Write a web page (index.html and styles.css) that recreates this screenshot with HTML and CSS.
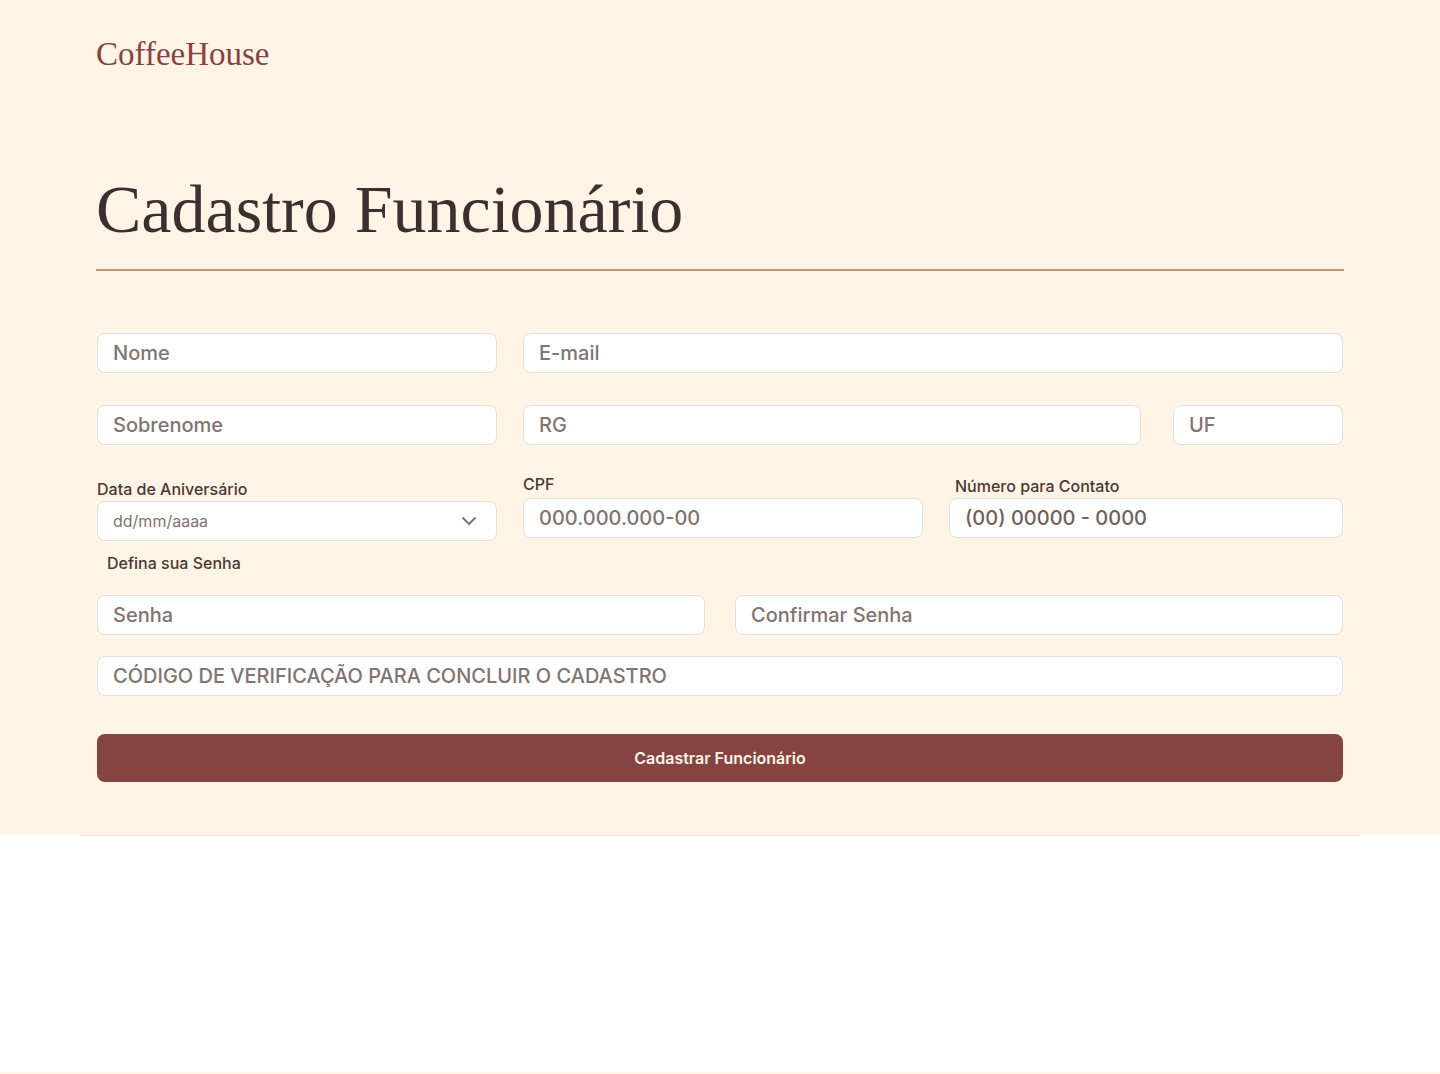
FILE: index.html
```html
<!DOCTYPE html>
<html lang="pt-BR">
<head>
  <meta charset="utf-8">
  <meta name="viewport" content="width=device-width, initial-scale=1">
  <title>Cadastro Funcionário | CoffeeHouse</title>
  <link rel="stylesheet" href="styles.css">
</head>
<body>
  <div class="page">
    <header class="header">
      <a class="logo" href="#">CoffeeHouse</a>
    </header>
    <main class="main">
      <h1 class="title">Cadastro Funcionário</h1>
      <form class="form">
        <div class="row row-name">
          <input class="input" type="text" placeholder="Nome" aria-label="Nome">
          <input class="input" type="email" placeholder="E-mail" aria-label="E-mail">
        </div>
        <div class="row row-document">
          <input class="input" type="text" placeholder="Sobrenome" aria-label="Sobrenome">
          <div class="row row-rg">
            <input class="input" type="text" placeholder="RG" aria-label="RG">
            <input class="input" type="text" placeholder="UF" aria-label="UF">
          </div>
        </div>
        <div class="row row-contact">
          <div class="field">
            <label class="label" for="birthday">Data de Aniversário</label>
            <div class="select-wrap">
              <select class="input select" id="birthday">
                <option>dd/mm/aaaa</option>
              </select>
              <svg class="chevron" viewBox="0 0 16 16" aria-hidden="true"><path d="M1.5 4.5 8 11l6.500-6.500"/></svg>
            </div>
          </div>
          <div class="field field-raised field-spaced">
            <label class="label" for="cpf">CPF</label>
            <input class="input" id="cpf" type="text" placeholder="000.000.000-00">
          </div>
          <div class="field field-raised">
            <label class="label label-indent" for="phone">Número para Contato</label>
            <input class="input input-phone" id="phone" type="tel" placeholder="(00) 00000 - 0000">
          </div>
        </div>
        <fieldset class="passwords">
          <legend class="label legend">Defina sua Senha</legend>
          <div class="row row-password">
            <input class="input" type="password" placeholder="Senha" aria-label="Senha">
            <input class="input" type="password" placeholder="Confirmar Senha" aria-label="Confirmar Senha">
          </div>
        </fieldset>
        <input class="input" type="text" placeholder="CÓDIGO DE VERIFICAÇÃO PARA CONCLUIR O CADASTRO" aria-label="Código de verificação">
        <button class="submit" type="submit">Cadastrar Funcionário</button>
      </form>
    </main>
  </div>
  <footer class="footer"></footer>
</body>
</html>
```
FILE: styles.css
```css
*,
*::before,
*::after {
  box-sizing: border-box;
}

body {
  display: flex;
  flex-direction: column;
  min-height: 100vh;
  margin: 0;
  background: #fff4e6;
  color: #4b3832;
  font-family: Inter, sans-serif;
}

.header {
  padding: 32px 96px;
}

.logo {
  display: block;
  color: #854442;
  font: 500 33px/44px "Liberation Serif", serif;
  text-decoration: none;
}

.main {
  padding: 60px 96px 53px;
}

.title {
  margin: 0;
  padding-bottom: 19px;
  border-bottom: 2px solid #be9b7b;
  color: #3c2f2f;
  font: 400 68px/82px "Liberation Serif", serif;
}

.form {
  padding: 62px 1px 0;
}

.row {
  display: grid;
}

.row-name {
  grid-template-columns: 400fr 820fr;
  gap: 26px;
  margin-bottom: 32px;
}

.row-document {
  grid-template-columns: 400fr 820fr;
  gap: 26px;
  margin-bottom: 27px;
}

.row-rg {
  grid-template-columns: 618fr 170fr;
  gap: 32px;
}

.row-contact {
  grid-template-columns: 400fr 400fr 394fr;
  align-items: end;
  gap: 26px;
}

.row-password {
  grid-template-columns: 1fr 1fr;
  gap: 30px;
}

.input {
  width: 100%;
  min-width: 0;
  height: 40px;
  padding: 0 15px;
  border: 1px solid #e0e0e0;
  border-radius: 8px;
  background: #fff;
  color: #4b3832;
  font: 500 20px/24px Inter, sans-serif;
}

.input::placeholder {
  color: #817471;
  opacity: 1;
}

.input-phone::placeholder {
  color: #6f605b;
}

.field {
  display: flex;
  flex-direction: column;
}

.field-raised {
  padding-bottom: 3px;
}

.field-spaced {
  gap: 2px;
}

.label {
  color: #4b3832;
  font-size: 16px;
  font-weight: 500;
  line-height: 24px;
}

.label-indent {
  padding-left: 6px;
}

.select-wrap {
  position: relative;
}

.select {
  display: block;
  appearance: none;
  color: #817471;
  font-size: 16px;
  font-weight: 400;
}

.chevron {
  position: absolute;
  top: 12px;
  right: 20px;
  width: 16px;
  height: 16px;
  fill: none;
  stroke: #817471;
  stroke-width: 2;
  pointer-events: none;
}

.passwords {
  min-width: 0;
  margin: 10px 0 21px;
  padding: 20px 0 0;
  border: 0;
}

.legend {
  padding: 0 10px;
}

.submit {
  display: block;
  width: 100%;
  height: 48px;
  margin-top: 38px;
  border: 0;
  border-radius: 8px;
  background: #854442;
  color: #fff4e6;
  font: 600 16px/24px Inter, sans-serif;
}

.footer {
  flex: 1;
  margin-bottom: 2px;
  background: #fff;
}

.footer::before {
  content: "";
  display: block;
  height: 1px;
  margin: 0 80px;
  background: #e6e6e6;
}
```
